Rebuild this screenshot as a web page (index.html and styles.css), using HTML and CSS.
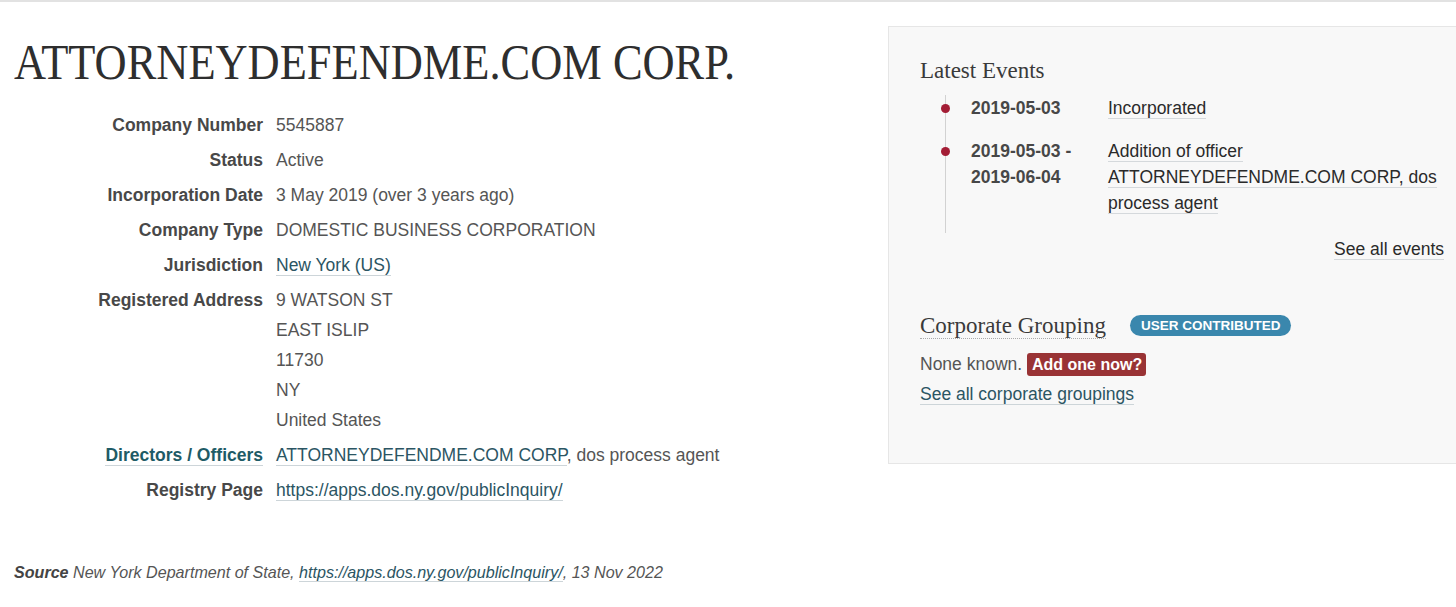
FILE: index.html
```html
<!DOCTYPE html>
<html lang="en">
<head>
<meta charset="utf-8">
<title>ATTORNEYDEFENDME.COM CORP.</title>
<link rel="stylesheet" href="styles.css">
</head>
<body>
<div class="topline"></div>
<div class="page">
  <main class="main">
    <h1 class="title"><span class="title-text">ATTORNEYDEFENDME.COM CORP.</span></h1>
    <dl class="attrs">
      <dt>Company Number</dt>
      <dd>5545887</dd>
      <dt>Status</dt>
      <dd>Active</dd>
      <dt>Incorporation Date</dt>
      <dd>3 May 2019 (over 3 years ago)</dd>
      <dt>Company Type</dt>
      <dd>DOMESTIC BUSINESS CORPORATION</dd>
      <dt>Jurisdiction</dt>
      <dd><a class="lnk" href="#">New York (US)</a></dd>
      <dt>Registered Address</dt>
      <dd>
        <ul class="address">
          <li>9 WATSON ST</li>
          <li>EAST ISLIP</li>
          <li>11730</li>
          <li>NY</li>
          <li>United States</li>
        </ul>
      </dd>
      <dt><a class="lnk dt-link" href="#">Directors / Officers</a></dt>
      <dd><a class="lnk" href="#">ATTORNEYDEFENDME.COM CORP</a>, dos process agent</dd>
      <dt>Registry Page</dt>
      <dd><a class="lnk" href="#">https://apps.dos.ny.gov/publicInquiry/</a></dd>
    </dl>
    <p class="source"><strong>Source</strong> New York Department of State, <a class="lnk" href="#">https://apps.dos.ny.gov/publicInquiry/</a>, 13 Nov 2022</p>
  </main>
  <aside class="panel">
    <h3 class="panel-title">Latest Events</h3>
    <ul class="events">
      <li class="event">
        <span class="event-date">2019-05-03</span>
        <span class="event-desc"><a class="ev-link" href="#">Incorporated</a></span>
      </li>
      <li class="event">
        <span class="event-date">2019-05-03 -<br>2019-06-04</span>
        <span class="event-desc"><a class="ev-link" href="#">Addition of officer ATTORNEYDEFENDME.COM CORP, dos process agent</a></span>
      </li>
    </ul>
    <div class="see-all"><a class="ev-link" href="#">See all events</a></div>
    <h3 class="panel-title group-title"><span class="dotted">Corporate Grouping</span><span class="badge-blue">USER CONTRIBUTED</span></h3>
    <p class="group-line first">None known. <a class="badge-red" href="#">Add one now?</a></p>
    <p class="group-line"><a class="lnk" href="#">See all corporate groupings</a></p>
  </aside>
</div>
</body>
</html>
```
FILE: styles.css
```css
html, body {
  margin: 0;
  padding: 0;
  background: #fff;
  overflow: hidden;
}
body {
  font-family: "Liberation Sans", Arial, sans-serif;
  font-size: 17.5px;
  color: #555;
}
.topline {
  height: 2px;
  background: #e2e2e2;
}
.page {
  display: grid;
  grid-template-columns: 888px minmax(0, 1fr);
  align-items: start;
}
.main {
  padding-left: 14px;
}
.title {
  margin: 32px 0 20px;
  height: 56px;
  font-family: "Liberation Serif", "Times New Roman", serif;
  font-weight: normal;
  font-size: 51px;
  line-height: 56px;
  color: #2e2e2e;
  white-space: nowrap;
}
.title-text {
  display: inline-block;
  transform: scaleX(0.871);
  transform-origin: left center;
}
.attrs {
  display: grid;
  grid-template-columns: 249px 1fr;
  column-gap: 13px;
  margin: 0;
  line-height: 30px;
}
.attrs dt {
  text-align: right;
  font-weight: bold;
  color: #484848;
  margin: 0 0 5px;
}
.attrs dd {
  margin: 0 0 5px;
  color: #555;
}
.address {
  list-style: none;
  margin: 0;
  padding: 0;
}
.lnk {
  color: #2b5563;
  text-decoration: none;
  border-bottom: 1px solid #cdd5d9;
}
.dt-link {
  color: #1e5b66;
}
.source {
  margin: 52px 0 0;
  font-size: 16.1px;
  line-height: 20px;
  font-style: italic;
  color: #555;
}
.source strong {
  color: #444;
}
.panel {
  margin-top: 24px;
  background: #f8f8f8;
  border: 1px solid #e6e6e6;
  border-right: none;
  padding: 29px 12px 54px 31px;
}
.panel-title {
  margin: 0;
  font-family: "Liberation Serif", "Times New Roman", serif;
  font-weight: normal;
  font-size: 23px;
  line-height: 30px;
  color: #3a3a3a;
}
.events {
  list-style: none;
  margin: 9px 0 0 25px;
  padding: 0;
  border-left: 1px solid #d2d2d2;
}
.event {
  position: relative;
  display: grid;
  grid-template-columns: 137px 336px;
  padding: 0 0 17px 25px;
  line-height: 26px;
}
.event::before {
  content: "";
  position: absolute;
  left: -5px;
  top: 9px;
  width: 9px;
  height: 9px;
  border-radius: 50%;
  background: #a31d35;
}
.event-date {
  font-weight: bold;
  color: #474747;
}
.ev-link {
  color: #2a2a2a;
  text-decoration: none;
  border-bottom: 1px solid #d5d9dc;
}
.see-all {
  margin-top: 3px;
  text-align: right;
  line-height: 26px;
}
.group-title {
  margin-top: 49px;
}
.dotted {
  border-bottom: 1px dotted #aaa;
}
.badge-blue {
  display: inline-block;
  vertical-align: 3px;
  margin-left: 24px;
  padding: 0 11px;
  height: 21px;
  line-height: 21px;
  border-radius: 11px;
  background: #3a87ad;
  color: #fff;
  font-family: "Liberation Sans", Arial, sans-serif;
  font-size: 13.5px;
  font-weight: bold;
}
.group-line {
  margin: 0;
  line-height: 30px;
  color: #555;
}
.group-line.first {
  margin-top: 8px;
}
.badge-red {
  display: inline-block;
  padding: 0 4px 0 5px;
  height: 23px;
  line-height: 23px;
  border-radius: 3px;
  background: #993335;
  color: #fff;
  font-size: 16px;
  font-weight: bold;
  text-decoration: none;
}
```
